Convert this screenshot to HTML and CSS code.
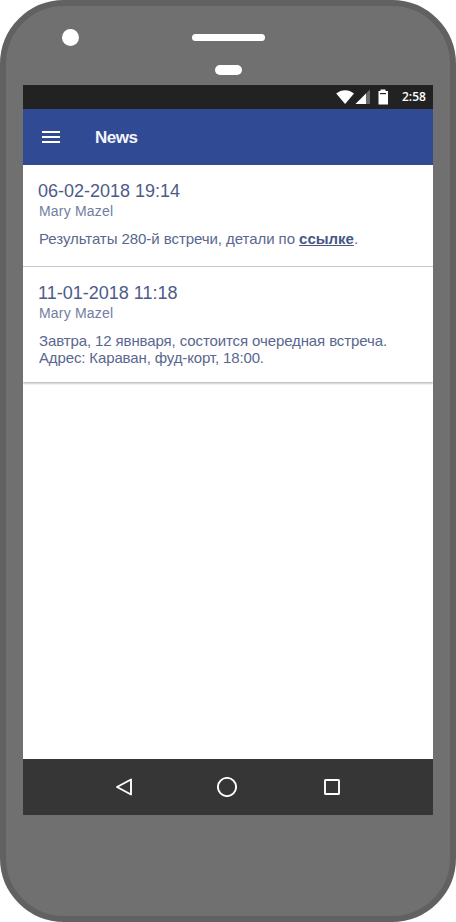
FILE: index.html
```html
<!DOCTYPE html>
<html lang="ru">
<head>
<meta charset="utf-8">
<title>News</title>
<link rel="stylesheet" href="styles.css">
</head>
<body>
<div class="phone">
  <div class="phone-top">
    <span class="camera"></span>
    <div class="earpiece"><span class="speaker"></span><span class="sensor"></span></div>
  </div>
  <div class="screen">
    <div class="status">
      <svg class="status-icons" width="56" height="24" viewBox="0 0 56 24">
        <path fill="#fff" d="M.2 8.6C5.5 4.1 12.7 4.1 18 8.6L9.1 19z"/>
        <path fill="#6a6a6a" d="M34 4.5V19H19.5z"/>
        <path fill="#fff" d="M30 8.5V19H19.5z"/>
        <path fill="#fff" d="M44.5 4.5h5V6H52v13.5h-9.5V6h2z"/>
        <path fill="#222" d="M44 8h6v1.2h-6z"/>
      </svg>
      <span class="clock">2:58</span>
    </div>
    <header class="toolbar">
      <svg width="18" height="12" viewBox="0 0 18 12"><path fill="#fff" d="M0 0h18v2H0zM0 5h18v2H0zM0 10h18v2H0z"/></svg>
      <h1>News</h1>
    </header>
    <main>
      <div class="list">
        <article>
          <h2>06-02-2018 19:14</h2>
          <h3>Mary Mazel</h3>
          <p><span class="l1">Результаты 280-й встречи, детали по <a>ссылке</a>.</span></p>
        </article>
        <article>
          <h2>11-01-2018 11:18</h2>
          <h3>Mary Mazel</h3>
          <p><span class="l2">Завтра, 12 явнваря, состоится очередная встреча.</span><br><span class="l3">Адрес: Караван, фуд-корт, 18:00.</span></p>
        </article>
      </div>
    </main>
    <nav>
      <svg width="20" height="20" viewBox="0 0 20 20"><path d="M3 10 17 2.5v15z"/></svg>
      <svg width="20" height="20" viewBox="0 0 20 20"><circle cx="10" cy="10" r="9.1"/></svg>
      <svg width="20" height="20" viewBox="0 0 20 20"><rect x="3" y="3" width="14" height="14" rx=".6"/></svg>
    </nav>
  </div>
</div>
</body>
</html>
```
FILE: styles.css
```css
* { box-sizing: border-box; margin: 0; }
body { background: #fff; font-family: "Liberation Sans", Arial, sans-serif; }
.phone { width: 456px; height: 922px; border: 6px solid #616161; border-radius: 64px; background: #707070; padding: 0 17px; }
.phone-top { height: 79px; display: flex; padding: 23px 0 0 39px; }
.camera { width: 17px; height: 17px; border-radius: 50%; background: #fff; }
.earpiece { display: flex; flex-direction: column; align-items: center; gap: 24px; margin-left: 113px; padding-top: 5px; }
.speaker { width: 73px; height: 7px; border-radius: 4px; background: #fff; }
.sensor { width: 27px; height: 10px; border-radius: 5px; background: #fff; }
.screen { width: 410px; height: 730px; display: flex; flex-direction: column; background: #fff; }
.status { height: 24px; background: #222; display: flex; justify-content: flex-end; padding-right: 7px; }
.clock { width: 24px; margin-left: 10px; color: #fff; font: 600 12px/24px "Open Sans", "Noto Sans", sans-serif; white-space: nowrap; }
.toolbar { height: 56px; background: #304a94; display: flex; align-items: center; padding-left: 19px; gap: 35px; }
h1 { color: #f4f5fb; font-size: 17px; font-weight: 700; line-height: 20px; letter-spacing: -.5px; padding-top: 2px; }
main { flex: 1; overflow: hidden; }
.list { box-shadow: 0 2px 2px rgba(0,0,0,.12), 0 1px 2px rgba(0,0,0,.2); background: #fff; }
article { padding: 16px 16px 0; height: 102px; border-bottom: 1px solid #c9c9c9; color: #4d5b89; }
article:last-child { height: 115px; border-bottom: 0; }
h2 { font-size: 18px; font-weight: 400; line-height: 20px; margin-left: -1px; }
h3 { font-size: 14px; font-weight: 400; line-height: 20px; color: #717d9f; letter-spacing: .2px; }
p { font-size: 15px; line-height: 17px; margin-top: 9px; white-space: nowrap; color: #5a678f; }
.l1 { letter-spacing: -.06px; }
.l2 { letter-spacing: -.11px; }
.l3 { letter-spacing: -.13px; }
a { font-weight: 700; text-decoration: underline; color: #485785; letter-spacing: 0; }
nav { height: 56px; background: #363636; display: flex; align-items: center; padding-left: 91px; gap: 85px; }
nav svg { fill: none; stroke: #fff; stroke-width: 1.9; stroke-linejoin: round; }
nav svg:first-child { margin-right: -2px; }
```
